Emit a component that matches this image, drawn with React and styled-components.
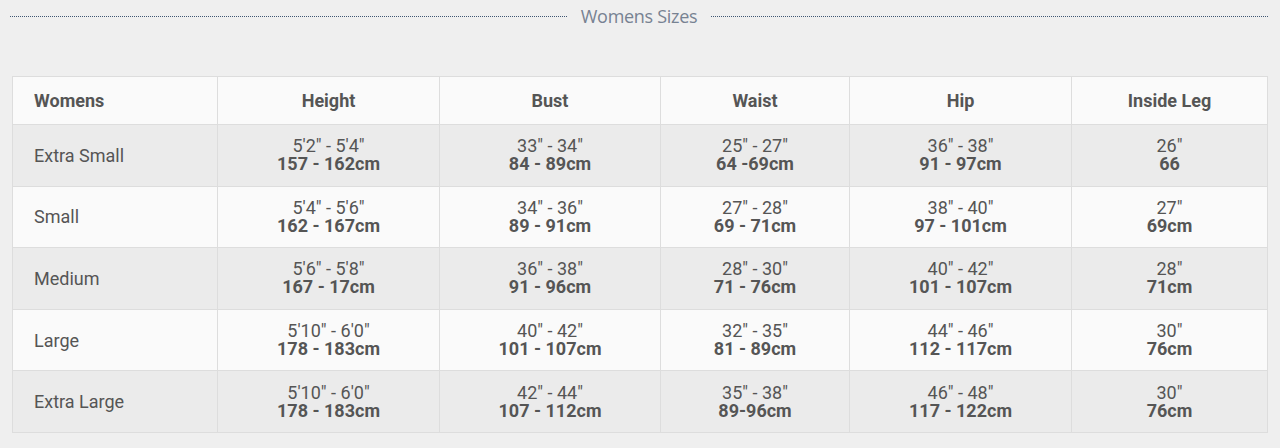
import styled, { createGlobalStyle } from 'styled-components';

const GlobalStyle = createGlobalStyle`
  body {
    margin: 0;
    background: #efefef;
    font-family: Roboto, "Liberation Sans", sans-serif;
  }
`;

const rows = [
  ['Extra Small', ['5′2" - 5′4"', '157 - 162cm'], ['33" - 34"', '84 - 89cm'], ['25" - 27"', '64 -69cm'], ['36" - 38"', '91 - 97cm'], ['26"', '66']],
  ['Small', ['5′4" - 5′6"', '162 - 167cm'], ['34" - 36"', '89 - 91cm'], ['27" - 28"', '69 - 71cm'], ['38" - 40"', '97 - 101cm'], ['27"', '69cm']],
  ['Medium', ['5′6" - 5′8"', '167 - 17cm'], ['36" - 38"', '91 - 96cm'], ['28" - 30"', '71 - 76cm'], ['40" - 42"', '101 - 107cm'], ['28"', '71cm']],
  ['Large', ['5′10" - 6′0"', '178 - 183cm'], ['40" - 42"', '101 - 107cm'], ['32" - 35"', '81 - 89cm'], ['44" - 46"', '112 - 117cm'], ['30"', '76cm']],
  ['Extra Large', ['5′10" - 6′0"', '178 - 183cm'], ['42" - 44"', '107 - 112cm'], ['35" - 38"', '89-96cm'], ['46" - 48"', '117 - 122cm'], ['30"', '76cm']],
];

const headings = ['Womens', 'Height', 'Bust', 'Waist', 'Hip', 'Inside Leg'];
const widths = [205, 222, 221, 189, 222, 196];

function App() {
  return (
    <>
      <GlobalStyle />
      <Page>
        <TitleBar>
          <Dots />
          <Title>Womens Sizes</Title>
          <Dots />
        </TitleBar>
        <SizeTable>
          <colgroup>
            {widths.map((w, i) => (
              <col key={i} style={{ width: w }} />
            ))}
          </colgroup>
          <thead>
            <tr>
              {headings.map((h, i) => (
                <HeadCell key={h} $first={i === 0}>
                  {h}
                </HeadCell>
              ))}
            </tr>
          </thead>
          <tbody>
            {rows.map((r, idx) => (
              <Row key={r[0]} $shaded={idx % 2 === 0}>
                <NameCell>{r[0]}</NameCell>
                {r.slice(1).map(([imp, metric], i) => (
                  <ValueCell key={i}>
                    <Imperial>{imp}</Imperial>
                    <Metric>{metric}</Metric>
                  </ValueCell>
                ))}
              </Row>
            ))}
          </tbody>
        </SizeTable>
      </Page>
    </>
  );
}

const Page = styled.div`
  padding: 0 12px 16px 10px;
`;

const TitleBar = styled.div`
  display: flex;
  align-items: center;
  gap: 14px;
  height: 32px;
  margin-bottom: 44px;
`;

const Dots = styled.div`
  flex: 1;
  border-top: 1px dotted #3f5672;
`;

const Title = styled.span`
  font-family: "Open Sans", sans-serif;
  font-size: 18px;
  color: #778292;
  letter-spacing: -0.3px;
`;

const SizeTable = styled.table`
  width: 1255px;
  margin-left: 2px;
  table-layout: fixed;
  border-collapse: collapse;
  color: #555;
  font-size: 18px;
`;

const HeadCell = styled.th`
  height: 47px;
  background: #fafafa;
  border: 1px solid #dddddd;
  font-weight: 700;
  text-align: ${(p) => (p.$first ? 'left' : 'center')};
  padding: 0 0 0 ${(p) => (p.$first ? '21px' : '0')};
`;

const Row = styled.tr`
  height: 61.6px;
  background: ${(p) => (p.$shaded ? '#ebebeb' : '#fafafa')};
`;

const NameCell = styled.td`
  border: 1px solid #dddddd;
  padding-left: 21px;
`;

const ValueCell = styled.td`
  border: 1px solid #dddddd;
  text-align: center;
  line-height: 18px;
`;

const Imperial = styled.div`
  font-weight: 400;
`;

const Metric = styled.div`
  font-weight: 700;
`;

export default App;
